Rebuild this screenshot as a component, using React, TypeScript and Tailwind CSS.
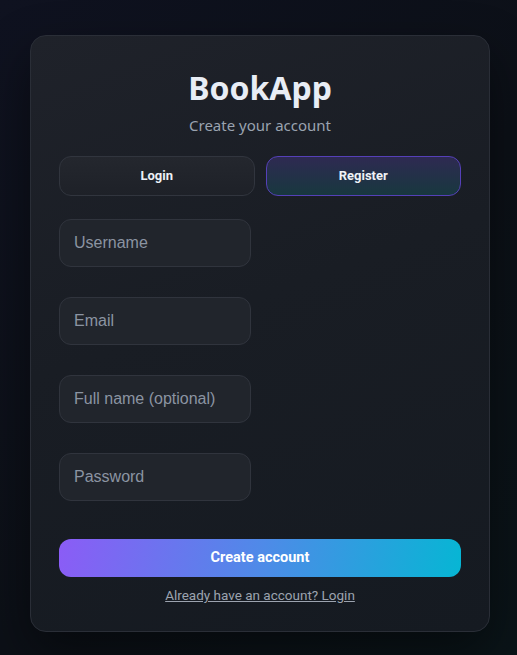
import { useState } from "react";

const FIELDS = [
  { name: "username", placeholder: "Username", type: "text" },
  { name: "email", placeholder: "Email", type: "email" },
  { name: "fullName", placeholder: "Full name (optional)", type: "text" },
  { name: "password", placeholder: "Password", type: "password" },
];

export default function App() {
  const [mode, setMode] = useState<"login" | "register">("register");

  return (
    <div className="min-h-screen w-full bg-[linear-gradient(135deg,#0f1220_0%,#0c1017_55%,#0a1418_100%)] px-[30px] pt-[35px] pb-6">
      <div className="mx-auto w-[460px] rounded-[16px] border border-[#2a2e37] bg-[linear-gradient(160deg,#1f222a_0%,#191d24_45%,#151a21_100%)] px-[28px] pt-[32px] pb-[25px] shadow-[0_20px_50px_rgba(0,0,0,0.45)]">
        {/* Header */}
        <h1 className="text-center font-['Noto_Sans',sans-serif] text-[32px] font-bold leading-[40px] text-[#e8edf5]">
          BookApp
        </h1>
        <p className="mt-[7px] text-center font-['Noto_Sans',sans-serif] text-[15px] leading-[20px] text-[#9aa3b0]">
          Create your account
        </p>

        {/* Tabs */}
        <div className="mt-[21px] grid grid-cols-2 gap-[11px]">
          <button
            type="button"
            onClick={() => setMode("login")}
            className={
              mode === "login"
                ? "h-[40px] rounded-[12px] border border-[#5540b8] bg-[linear-gradient(180deg,#2e2a52_0%,#18383f_100%)] font-['Roboto',sans-serif] text-[13px] font-bold text-[#eef1f6]"
                : "h-[40px] rounded-[12px] border border-[#31353e] bg-[linear-gradient(180deg,#24272e_0%,#1e2128_100%)] font-['Roboto',sans-serif] text-[13px] font-bold text-[#eef1f6]"
            }
          >
            Login
          </button>
          <button
            type="button"
            onClick={() => setMode("register")}
            className={
              mode === "register"
                ? "h-[40px] rounded-[12px] border border-[#5540b8] bg-[linear-gradient(180deg,#2e2a52_0%,#18383f_100%)] font-['Roboto',sans-serif] text-[13px] font-bold text-[#eef1f6]"
                : "h-[40px] rounded-[12px] border border-[#31353e] bg-[linear-gradient(180deg,#24272e_0%,#1e2128_100%)] font-['Roboto',sans-serif] text-[13px] font-bold text-[#eef1f6]"
            }
          >
            Register
          </button>
        </div>

        {/* Fields */}
        <form className="mt-[23px] flex flex-col" onSubmit={(e) => e.preventDefault()}>
          <div className="flex flex-col gap-[30px]">
            {FIELDS.map((field) => (
              <input
                key={field.name}
                name={field.name}
                type={field.type}
                placeholder={field.placeholder}
                className="h-[48px] w-[192px] rounded-[12px] border border-[#30343d] bg-[#21252c] px-[14px] font-['Liberation_Sans',Arial,sans-serif] text-[16px] text-[#e5e7eb] outline-none placeholder:text-[#8b94a2]"
              />
            ))}
          </div>

          <button
            type="submit"
            className="mt-[38px] h-[38px] w-full rounded-[12px] bg-[linear-gradient(100deg,#8b5cf6_0%,#4f8ae8_50%,#06b6d4_100%)] font-['Roboto',sans-serif] text-[14.5px] font-bold text-white"
          >
            Create account
          </button>
        </form>

        <div className="mt-[5px] text-center">
          <a
            href="#"
            onClick={(e) => {
              e.preventDefault();
              setMode("login");
            }}
            className="font-['Roboto',sans-serif] text-[13.5px] leading-[16px] text-[#9ca3af] underline"
          >
            Already have an account? Login
          </a>
        </div>
      </div>
    </div>
  );
}
